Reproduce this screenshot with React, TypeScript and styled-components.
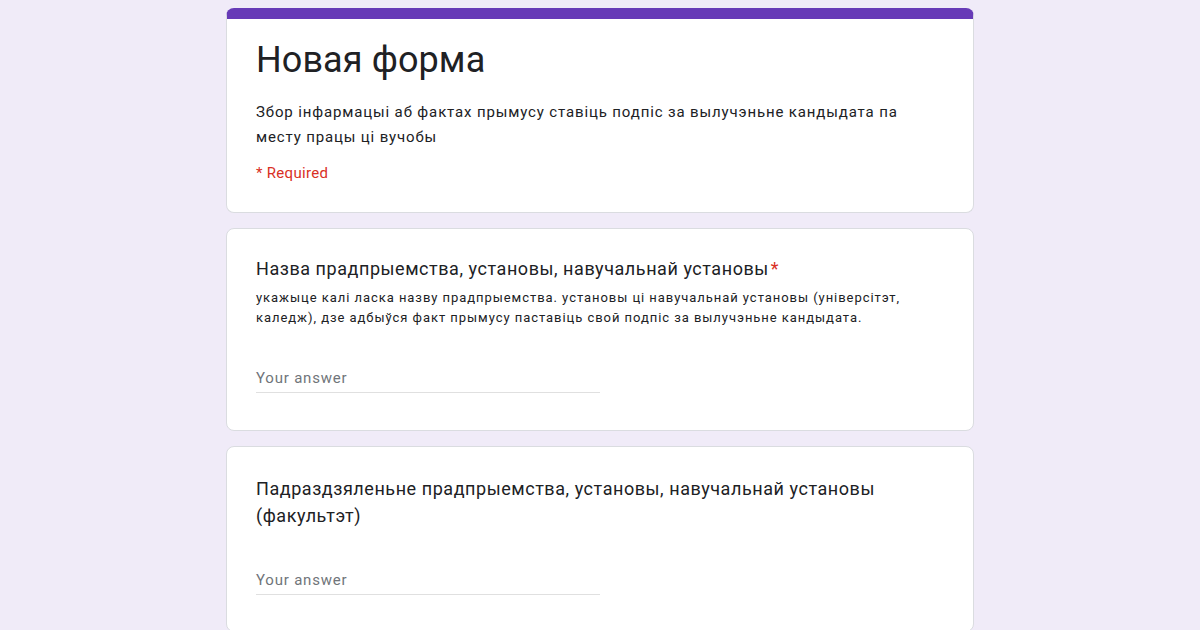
import styled, { createGlobalStyle } from "styled-components";

const PURPLE = "#673ab7";
const RED = "#d93025";

const GlobalStyle = createGlobalStyle`
  html, body {
    margin: 0;
    padding: 0;
    background: #f0ebf8;
  }
  body {
    font-family: Roboto, "Noto Sans", Arial, sans-serif;
    color: #202124;
  }
`;

const Page = styled.div`
  display: flex;
  flex-direction: column;
  align-items: center;
  gap: 15px;
  padding-top: 8px;
  height: 630px;
  overflow: hidden;
  box-sizing: border-box;
`;

const Card = styled.div<{ $accent?: boolean }>`
  width: 748px;
  box-sizing: border-box;
  background: #fff;
  border: 1px solid #dadce0;
  border-radius: 8px;
  overflow: hidden;
  flex-shrink: 0;
  ${(p) => p.$accent && `border-top: 11px solid ${PURPLE};`}
`;

const CardBody = styled.div<{ $pad?: string }>`
  padding: ${(p) => p.$pad || "24px 29px"};
`;

const Title = styled.h1`
  margin: 0;
  font-family: Roboto, "Noto Sans", sans-serif;
  font-weight: 400;
  font-size: 36px;
  line-height: 44px;
  letter-spacing: 0.1px;
  color: #202124;
`;

const Description = styled.p`
  margin: 18px 0 0;
  font-size: 15px;
  line-height: 25px;
  letter-spacing: 0.86px;
  color: #202124;
  max-width: 660px;
`;

const Required = styled.div`
  margin-top: 13px;
  font-size: 15px;
  line-height: 20px;
  letter-spacing: 0.3px;
  color: ${RED};
`;

const Question = styled.div`
  font-size: 18px;
  line-height: 27px;
  letter-spacing: 0.55px;
  color: #202124;
  max-width: 680px;
`;

const Star = styled.span`
  color: ${RED};
  margin-left: 2px;
`;

const Hint = styled.div`
  margin-top: 6px;
  font-size: 13px;
  line-height: 20px;
  letter-spacing: 0.95px;
  color: #202124;
  max-width: 680px;
`;

const Answer = styled.div<{ $top: number }>`
  margin-top: ${(p) => p.$top}px;
  width: 344px;
  padding-bottom: 4px;
  border-bottom: 1px solid #e0e0e0;
  font-size: 15px;
  line-height: 20px;
  color: #70757a;
  letter-spacing: 0.8px;
`;

export default function App() {
  return (
    <>
      <GlobalStyle />
      <Page>
        <Card $accent>
          <CardBody $pad="19px 29px 29px">
            <Title>Новая форма</Title>
            <Description>
              Збор інфармацыі аб фактах прымусу ставіць подпіс за вылучэньне кандыдата па
              месту працы ці вучобы
            </Description>
            <Required>* Required</Required>
          </CardBody>
        </Card>
        <Card>
          <CardBody $pad="26px 29px 37px">
            <Question>
              Назва прадпрыемства, установы, навучальнай установы<Star>*</Star>
            </Question>
            <Hint>
              укажыце калі ласка назву прадпрыемства. установы ці навучальнай установы (універсітэт,
              каледж), дзе адбыўся факт прымусу паставіць свой подпіс за вылучэньне кандыдата.
            </Hint>
            <Answer $top={40}>Your answer</Answer>
          </CardBody>
        </Card>
        <Card>
          <CardBody $pad="28px 29px 36px">
            <Question>
              Падраздзяленьне прадпрыемства, установы, навучальнай установы (факультэт)
            </Question>
            <Answer $top={41}>Your answer</Answer>
          </CardBody>
        </Card>
      </Page>
    </>
  );
}
